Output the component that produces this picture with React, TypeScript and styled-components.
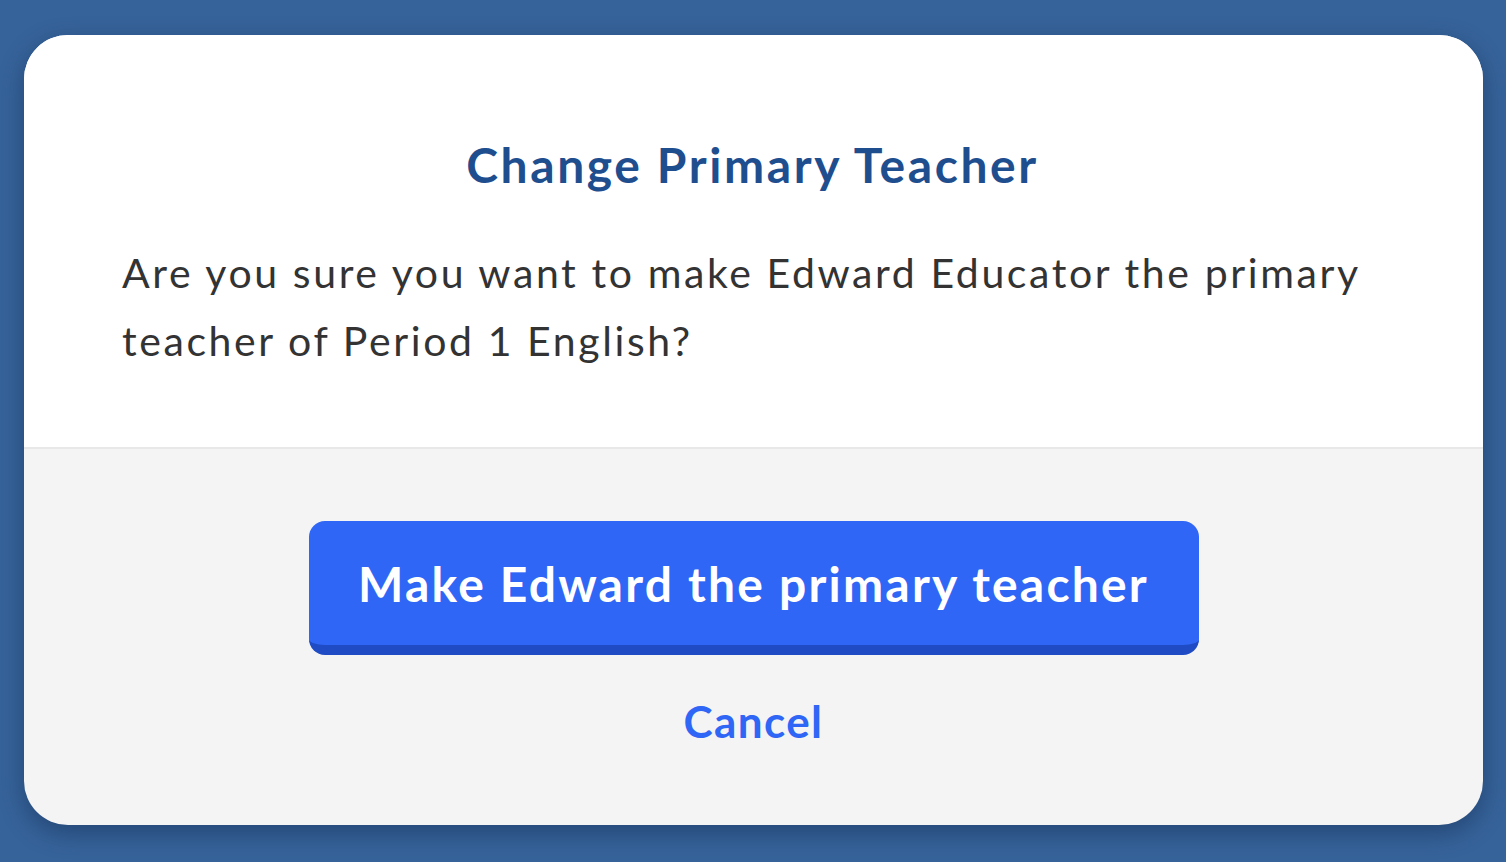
import React from "react";
import styled, { createGlobalStyle } from "styled-components";

const GlobalStyle = createGlobalStyle`
  html, body {
    margin: 0;
    padding: 0;
    background: #36639a;
    font-family: Lato, "Noto Sans", sans-serif;
  }
`;

const Page = styled.div`
  box-sizing: border-box;
  width: 1506px;
  height: 862px;
  padding: 35px 23px 37px 24px;
`;

const Modal = styled.div`
  height: 100%;
  border-radius: 44px;
  overflow: hidden;
  background: #f4f4f4;
  box-shadow: 0 8px 24px rgba(15, 35, 70, 0.45);
  display: flex;
  flex-direction: column;
`;

const Body = styled.div`
  background: #ffffff;
  height: 414px;
  box-sizing: border-box;
  padding: 100px 100px 0 98px;
  border-bottom: 2px solid #e8e8e8;
`;

const Title = styled.h2`
  margin: 0 0 44px;
  text-align: center;
  font-size: 48px;
  line-height: 60px;
  font-weight: 700;
  letter-spacing: 2.6px;
  color: #1f4e8f;
`;

const Message = styled.p`
  margin: 0;
  font-size: 41px;
  line-height: 68px;
  letter-spacing: 2.6px;
  color: #333333;
`;

const Footer = styled.div`
  flex: 1;
  display: flex;
  flex-direction: column;
  align-items: center;
  padding-top: 72px;
`;

const PrimaryButton = styled.button`
  box-sizing: border-box;
  width: 890px;
  height: 134px;
  border: none;
  border-bottom: 10px solid #1f4bc4;
  border-radius: 16px;
  background: #2f66f5;
  color: #ffffff;
  font-family: inherit;
  font-size: 48px;
  font-weight: 700;
  letter-spacing: 2.2px;
  padding: 0;
`;

const LinkButton = styled.button`
  margin-top: 40px;
  border: none;
  background: none;
  color: #2f66f5;
  font-family: inherit;
  font-size: 44px;
  font-weight: 700;
  letter-spacing: 1.4px;
  padding: 0;
`;

export default function App() {
  return (
    <>
      <GlobalStyle />
      <Page>
        <Modal>
          <Body>
            <Title>Change Primary Teacher</Title>
            <Message>
              Are you sure you want to make Edward Educator the primary teacher
              of Period 1 English?
            </Message>
          </Body>
          <Footer>
            <PrimaryButton>Make Edward the primary teacher</PrimaryButton>
            <LinkButton>Cancel</LinkButton>
          </Footer>
        </Modal>
      </Page>
    </>
  );
}
